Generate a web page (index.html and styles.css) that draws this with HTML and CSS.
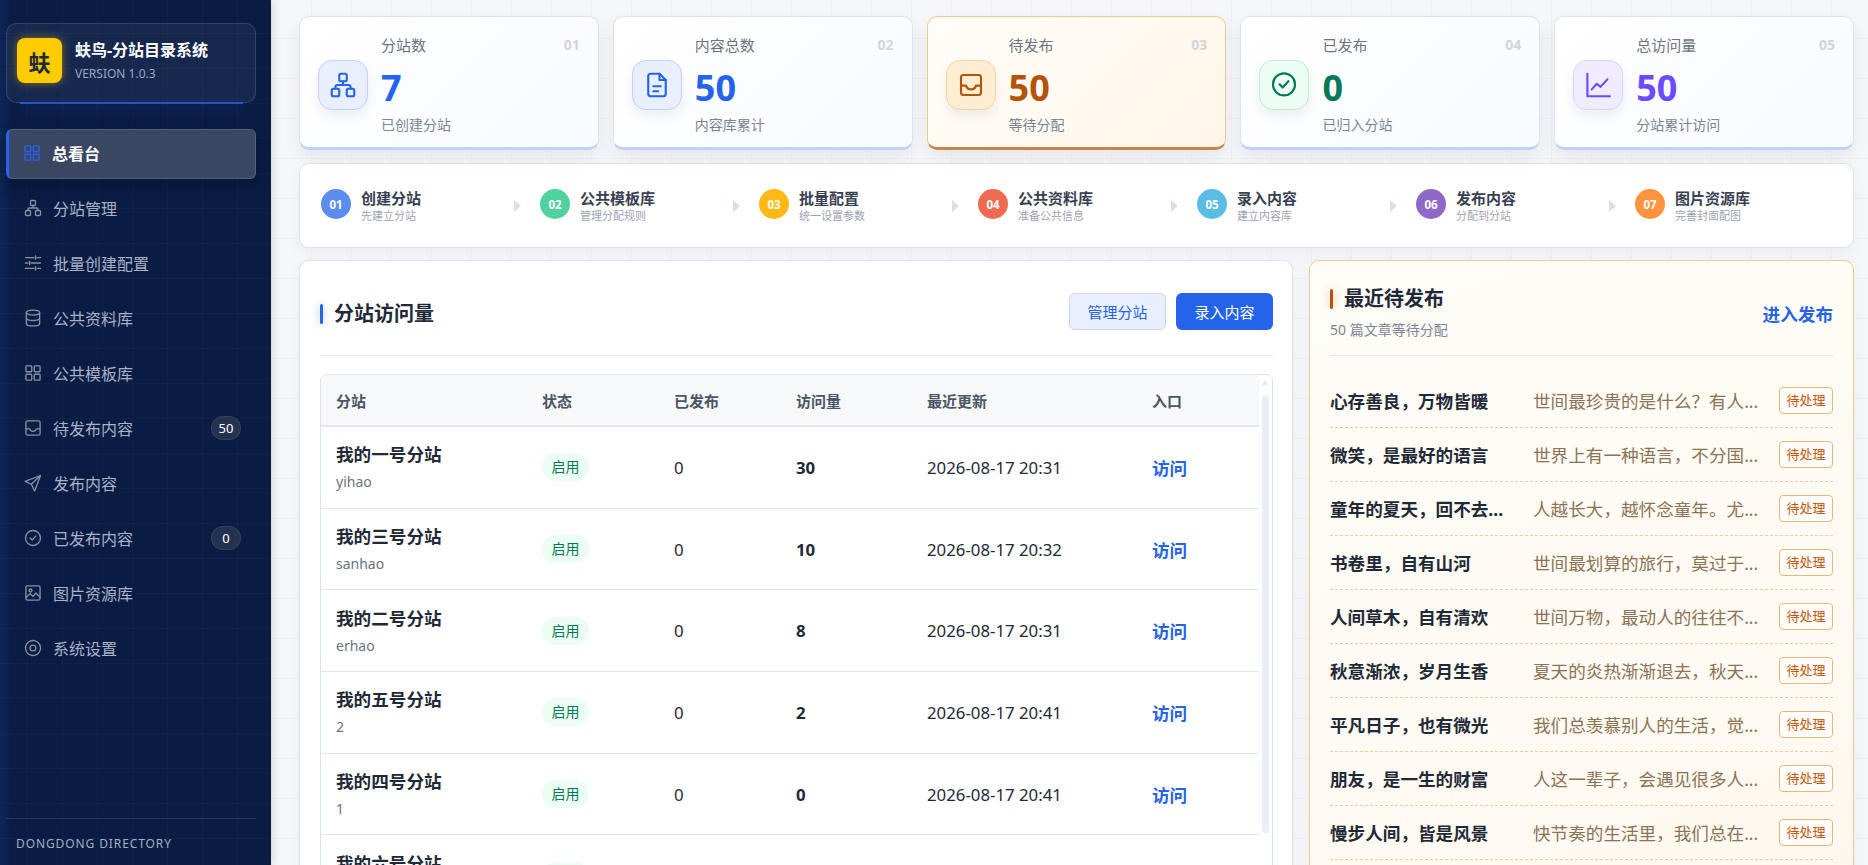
FILE: index.html
```html
<!DOCTYPE html>
<html lang="zh-CN">

<head>
    <meta charset="UTF-8">
    <meta name="viewport" content="width=device-width, initial-scale=1.0">
    <title>蚨鸟-分站目录系统</title>
    <link rel="stylesheet" href="styles.css">
</head>

<body>
    <aside class="sidebar">
        <div class="brand">
            <div class="brand-logo">蚨</div>
            <div>
                <div class="brand-name">蚨鸟-分站目录系统</div>
                <div class="brand-version">VERSION 1.0.3</div>
            </div>
        </div>

        <nav class="nav">
            <a class="nav-item active">
                <svg class="icon" viewBox="0 0 24 24"><rect x="3.5" y="3.5" width="7" height="7" rx="1"/><rect x="13.5" y="3.5" width="7" height="7" rx="1"/><rect x="3.5" y="13.5" width="7" height="7" rx="1"/><rect x="13.5" y="13.5" width="7" height="7" rx="1"/></svg>
                总看台
            </a>
            <a class="nav-item">
                <svg class="icon" viewBox="0 0 24 24"><rect x="9" y="3" width="6" height="6" rx="1.2"/><rect x="3" y="15" width="6" height="6" rx="1.2"/><rect x="15" y="15" width="6" height="6" rx="1.2"/><path d="M6 15v-1.5a1.5 1.5 0 0 1 1.5-1.5h9a1.5 1.5 0 0 1 1.5 1.5V15M12 9v3"/></svg>
                分站管理
            </a>
            <a class="nav-item">
                <svg class="icon" viewBox="0 0 24 24"><path d="M3 5.5h10M17 5.5h4M15 3.5v4M3 12h3M10 12h11M8 10v4M3 18.5h10M17 18.5h4M15 16.5v4"/></svg>
                批量创建配置
            </a>
            <a class="nav-item">
                <svg class="icon" viewBox="0 0 24 24"><ellipse cx="12" cy="5.5" rx="8" ry="3"/><path d="M4 5.5v13c0 1.7 3.6 3 8 3s8-1.3 8-3v-13M4 12c0 1.7 3.6 3 8 3s8-1.3 8-3"/></svg>
                公共资料库
            </a>
            <a class="nav-item">
                <svg class="icon" viewBox="0 0 24 24"><rect x="3.5" y="3.5" width="7" height="7" rx="1"/><rect x="13.5" y="3.5" width="7" height="7" rx="1"/><rect x="3.5" y="13.5" width="7" height="7" rx="1"/><rect x="13.5" y="13.5" width="7" height="7" rx="1"/></svg>
                公共模板库
            </a>
            <a class="nav-item">
                <svg class="icon" viewBox="0 0 24 24"><rect x="3.5" y="3.5" width="17" height="17" rx="2"/><path d="M3.5 13H8c.6 2 2 3 4 3s3.400-1 4-3h4.500"/></svg>
                待发布内容
                <span class="nav-badge">50</span>
            </a>
            <a class="nav-item">
                <svg class="icon" viewBox="0 0 24 24"><path d="M21 3 2.500 10l7.500 3.500L14 21.500z"/><path d="M21 3 10 13.500"/></svg>
                发布内容
            </a>
            <a class="nav-item">
                <svg class="icon" viewBox="0 0 24 24"><circle cx="12" cy="12" r="9"/><path d="m8.500 12 2.500 2.500 4.500-5"/></svg>
                已发布内容
                <span class="nav-badge">0</span>
            </a>
            <a class="nav-item">
                <svg class="icon" viewBox="0 0 24 24"><rect x="3.500" y="3.500" width="17" height="17" rx="2"/><circle cx="9" cy="9" r="1.800"/><path d="m3.500 17.500 5-4.500 3.500 3 3.500-4 5 5"/></svg>
                图片资源库
            </a>
            <a class="nav-item">
                <svg class="icon" viewBox="0 0 24 24"><circle cx="12" cy="12" r="3.500"/><circle cx="12" cy="12" r="9" stroke-dasharray="5 0.600"/></svg>
                系统设置
            </a>
        </nav>

        <div class="sidebar-foot">DONGDONG DIRECTORY</div>
    </aside>

    <main class="main">
        <section class="stats">
            <div class="stat">
                <div class="stat-icon"><svg class="icon" viewBox="0 0 24 24"><rect x="9" y="3" width="6" height="6" rx="1.200"/><rect x="3" y="15" width="6" height="6" rx="1.200"/><rect x="15" y="15" width="6" height="6" rx="1.200"/><path d="M6 15v-1.500a1.500 1.500 0 0 1 1.500-1.500h9a1.500 1.500 0 0 1 1.500 1.500V15M12 9v3"/></svg></div>
                <div>
                    <div class="stat-label">分站数</div>
                    <div class="stat-value">7</div>
                    <div class="stat-sub">已创建分站</div>
                </div>
                <span class="stat-no">01</span>
            </div>
            <div class="stat">
                <div class="stat-icon"><svg class="icon" viewBox="0 0 24 24"><path d="M14 3H7a2 2 0 0 0-2 2v14a2 2 0 0 0 2 2h10a2 2 0 0 0 2-2V8z"/><path d="M14 3v5h5M9 13h6M9 17h4"/></svg></div>
                <div>
                    <div class="stat-label">内容总数</div>
                    <div class="stat-value">50</div>
                    <div class="stat-sub">内容库累计</div>
                </div>
                <span class="stat-no">02</span>
            </div>
            <div class="stat warn">
                <div class="stat-icon"><svg class="icon" viewBox="0 0 24 24"><rect x="4" y="4" width="16" height="16" rx="2"/><path d="M4 12.500h4c.6 2 2 3 4 3s3.400-1 4-3h4"/></svg></div>
                <div>
                    <div class="stat-label">待发布</div>
                    <div class="stat-value">50</div>
                    <div class="stat-sub">等待分配</div>
                </div>
                <span class="stat-no">03</span>
            </div>
            <div class="stat ok">
                <div class="stat-icon"><svg class="icon" viewBox="0 0 24 24"><circle cx="12" cy="11.500" r="8.800"/><path d="m8.500 11.500 2.500 2.500 4.500-5"/></svg></div>
                <div>
                    <div class="stat-label">已发布</div>
                    <div class="stat-value">0</div>
                    <div class="stat-sub">已归入分站</div>
                </div>
                <span class="stat-no">04</span>
            </div>
            <div class="stat violet">
                <div class="stat-icon"><svg class="icon" viewBox="0 0 24 24"><path d="M3.500 3v18h18M7 15.500l4-4.500 3 2.500 5.500-6"/></svg></div>
                <div>
                    <div class="stat-label">总访问量</div>
                    <div class="stat-value">50</div>
                    <div class="stat-sub">分站累计访问</div>
                </div>
                <span class="stat-no">05</span>
            </div>
        </section>

        <section class="steps">
            <div class="step"><span class="step-no c1">01</span><div><div class="step-title">创建分站</div><div class="step-sub">先建立分站</div></div></div>
            <div class="step"><span class="step-no c2">02</span><div><div class="step-title">公共模板库</div><div class="step-sub">管理分配规则</div></div></div>
            <div class="step"><span class="step-no c3">03</span><div><div class="step-title">批量配置</div><div class="step-sub">统一设置参数</div></div></div>
            <div class="step"><span class="step-no c4">04</span><div><div class="step-title">公共资料库</div><div class="step-sub">准备公共信息</div></div></div>
            <div class="step"><span class="step-no c5">05</span><div><div class="step-title">录入内容</div><div class="step-sub">建立内容库</div></div></div>
            <div class="step"><span class="step-no c6">06</span><div><div class="step-title">发布内容</div><div class="step-sub">分配到分站</div></div></div>
            <div class="step"><span class="step-no c7">07</span><div><div class="step-title">图片资源库</div><div class="step-sub">完善封面配图</div></div></div>
        </section>

        <section class="panels">
            <div class="panel panel-sites">
                <div class="panel-head">
                    <h2 class="panel-title">分站访问量</h2>
                    <div class="panel-actions">
                        <button class="btn btn-soft">管理分站</button>
                        <button class="btn btn-primary">录入内容</button>
                    </div>
                </div>

                <div class="table-wrap">
                    <table class="site-table">
                        <colgroup>
                            <col class="col-name">
                            <col class="col-status">
                            <col class="col-pub">
                            <col class="col-visits">
                            <col class="col-date">
                            <col class="col-link">
                        </colgroup>
                        <thead>
                            <tr><th>分站</th><th>状态</th><th>已发布</th><th>访问量</th><th>最近更新</th><th>入口</th></tr>
                        </thead>
                        <tbody>
                            <tr>
                                <td><div class="site-name">我的一号分站</div><div class="site-slug">yihao</div></td>
                                <td><span class="pill">启用</span></td>
                                <td>0</td><td class="strong">30</td><td>2026-08-17 20:31</td><td><a class="visit">访问</a></td>
                            </tr>
                            <tr>
                                <td><div class="site-name">我的三号分站</div><div class="site-slug">sanhao</div></td>
                                <td><span class="pill">启用</span></td>
                                <td>0</td><td class="strong">10</td><td>2026-08-17 20:32</td><td><a class="visit">访问</a></td>
                            </tr>
                            <tr>
                                <td><div class="site-name">我的二号分站</div><div class="site-slug">erhao</div></td>
                                <td><span class="pill">启用</span></td>
                                <td>0</td><td class="strong">8</td><td>2026-08-17 20:31</td><td><a class="visit">访问</a></td>
                            </tr>
                            <tr>
                                <td><div class="site-name">我的五号分站</div><div class="site-slug">2</div></td>
                                <td><span class="pill">启用</span></td>
                                <td>0</td><td class="strong">2</td><td>2026-08-17 20:41</td><td><a class="visit">访问</a></td>
                            </tr>
                            <tr>
                                <td><div class="site-name">我的四号分站</div><div class="site-slug">1</div></td>
                                <td><span class="pill">启用</span></td>
                                <td>0</td><td class="strong">0</td><td>2026-08-17 20:41</td><td><a class="visit">访问</a></td>
                            </tr>
                            <tr>
                                <td><div class="site-name">我的六号分站</div><div class="site-slug">&nbsp;</div></td>
                                <td><span class="pill">启用</span></td>
                                <td></td><td></td><td></td><td></td>
                            </tr>
                        </tbody>
                    </table>
                    <div class="scrollbar">
                        <div class="scroll-up"></div>
                        <div class="scroll-thumb"></div>
                    </div>
                </div>
            </div>

            <div class="panel panel-warm">
                <div class="panel-head">
                    <div>
                        <h2 class="panel-title">最近待发布</h2>
                        <p class="panel-sub">50 篇文章等待分配</p>
                    </div>
                    <a class="panel-link">进入发布</a>
                </div>

                <ul class="queue">
                    <li><span class="queue-title">心存善良，万物皆暖</span><span class="queue-text">世间最珍贵的是什么？有人...</span><span class="tag">待处理</span></li>
                    <li><span class="queue-title">微笑，是最好的语言</span><span class="queue-text">世界上有一种语言，不分国...</span><span class="tag">待处理</span></li>
                    <li><span class="queue-title">童年的夏天，回不去...</span><span class="queue-text">人越长大，越怀念童年。尤...</span><span class="tag">待处理</span></li>
                    <li><span class="queue-title">书卷里，自有山河</span><span class="queue-text">世间最划算的旅行，莫过于...</span><span class="tag">待处理</span></li>
                    <li><span class="queue-title">人间草木，自有清欢</span><span class="queue-text">世间万物，最动人的往往不...</span><span class="tag">待处理</span></li>
                    <li><span class="queue-title">秋意渐浓，岁月生香</span><span class="queue-text">夏天的炎热渐渐退去，秋天...</span><span class="tag">待处理</span></li>
                    <li><span class="queue-title">平凡日子，也有微光</span><span class="queue-text">我们总羡慕别人的生活，觉...</span><span class="tag">待处理</span></li>
                    <li><span class="queue-title">朋友，是一生的财富</span><span class="queue-text">人这一辈子，会遇见很多人...</span><span class="tag">待处理</span></li>
                    <li><span class="queue-title">慢步人间，皆是风景</span><span class="queue-text">快节奏的生活里，我们总在...</span><span class="tag">待处理</span></li>
                </ul>
            </div>
        </section>
    </main>
</body>

</html>
```

FILE: styles.css
```css
* {
    box-sizing: border-box;
    padding: 0;
    margin: 0;
}

html,
body {
    height: 100%;
    overflow: hidden;
}

body {
    display: flex;
    font-family: "Noto Sans", "Noto Sans CJK SC", sans-serif;
    font-size: 16px;
    color: #1f2937;
    background-color: #f4f6f9;
}

.icon {
    display: block;
    width: 20px;
    height: 20px;
    fill: none;
    stroke: currentColor;
    stroke-width: 1.6;
    stroke-linecap: round;
    stroke-linejoin: round;
    flex-shrink: 0;
}

/* sidebar */
.sidebar {
    display: flex;
    flex-direction: column;
    flex-shrink: 0;
    width: 271px;
    height: 100vh;
    padding: 23px 15px 0 6px;
    background-color: #0a1c44;
    background-image:
        linear-gradient(90deg, rgba(28, 84, 170, 0.2), rgba(28, 84, 170, 0) 12px),
        linear-gradient(rgba(255, 255, 255, 0.025) 1px, transparent 1px),
        linear-gradient(90deg, rgba(255, 255, 255, 0.025) 1px, transparent 1px);
    background-size: 100% 100%, 35px 35px, 35px 35px;
    background-position: 0 0, 0 33px, 27px 0;
    box-shadow: 2px 0 8px rgba(15, 23, 42, 0.12);
}

.brand {
    position: relative;
    display: flex;
    align-items: center;
    gap: 13px;
    height: 80px;
    padding: 0 0 5px 10px;
    border: 1px solid rgba(255, 255, 255, 0.12);
    border-radius: 10px;
    background-color: rgba(255, 255, 255, 0.055);
}

.brand::after {
    content: "";
    position: absolute;
    left: 13px;
    right: 12px;
    bottom: -2px;
    height: 2px;
    background-color: #2158c9;
    box-shadow: 0 4px 12px rgba(37, 99, 235, 0.45);
}

.brand-logo {
    display: flex;
    align-items: center;
    justify-content: center;
    width: 45px;
    height: 45px;
    border-radius: 8px;
    background-color: #ffcc00;
    box-shadow: 0 0 10px rgba(255, 204, 0, 0.45);
    color: #1f2937;
    font-size: 22px;
    font-weight: 700;
}

.brand-name {
    color: #fff;
    font-size: 16px;
    font-weight: 700;
    line-height: 24px;
}

.brand-version {
    margin-top: 3px;
    color: #9aa7bf;
    font-size: 12px;
    line-height: 18px;
}

.nav {
    display: flex;
    flex-direction: column;
    gap: 5px;
    margin-top: 26px;
}

.nav-item {
    display: flex;
    align-items: center;
    gap: 10px;
    height: 50px;
    padding: 0 14px 2px 16px;
    border: 1px solid transparent;
    border-radius: 6px;
    color: #a8b2c6;
    font-size: 16px;
}

.nav-item .icon {
    color: #868fa3;
}

.nav-item.active {
    padding-left: 13px;
    border-color: rgba(255, 255, 255, 0.14);
    border-left: 3px solid #2563eb;
    background-color: #3a4763;
    color: #fff;
    font-weight: 700;
    box-shadow: 0 6px 16px rgba(0, 0, 0, 0.2);
}

.nav-item.active .icon {
    color: #2563eb;
}

.nav-badge {
    margin-left: auto;
    width: 30px;
    height: 24px;
    border: 1px solid rgba(255, 255, 255, 0.08);
    border-radius: 12px;
    background-color: #24324f;
    color: #fff;
    font-size: 13px;
    line-height: 22px;
    text-align: center;
}

.sidebar-foot {
    margin-top: auto;
    height: 47px;
    padding: 16px 0 0 10px;
    border-top: 1px solid rgba(255, 255, 255, 0.12);
    color: #a3aec2;
    font-size: 12px;
    line-height: 18px;
    letter-spacing: 0.9px;
}

/* main */
.main {
    flex: 1;
    min-width: 0;
    height: 100vh;
    padding: 16px 14px 0 28px;
    overflow: hidden;
    background-image:
        linear-gradient(rgba(15, 23, 42, 0.025) 1px, transparent 1px),
        linear-gradient(90deg, rgba(15, 23, 42, 0.025) 1px, transparent 1px);
    background-size: 40px 40px;
    background-position: 0 -2px, 0 0;
}

.stats {
    display: grid;
    grid-template-columns: repeat(5, minmax(0, 1fr));
    gap: 14px;
    margin-bottom: 13px;
}

.stat {
    position: relative;
    display: flex;
    align-items: center;
    gap: 13px;
    height: 134px;
    padding: 5px 18px 0;
    border: 1px solid #dbe3f0;
    border-bottom: 3px solid #bfd1f6;
    border-radius: 10px;
    background: linear-gradient(135deg, #fff, #f8faff);
    box-shadow: 0 8px 18px rgba(15, 23, 42, 0.06);
    --tone: #2563eb;
    --tone-bg: #e9effd;
    --tone-line: #c2d2f8;
}

.stat.warn {
    border-color: #f0c98e;
    border-bottom-color: #c8854a;
    background: linear-gradient(135deg, #fffdf9, #fff6e9);
    --tone: #b45309;
    --tone-bg: #fdeed3;
    --tone-line: #f3d5a4;
}

.stat.ok {
    --tone: #047857;
    --tone-bg: #ecfdf3;
    --tone-line: #c3ebd5;
}

.stat.violet {
    --tone: #6d4aff;
    --tone-bg: #f0ebff;
    --tone-line: #ddd4fd;
}

.stat-icon {
    display: flex;
    align-items: center;
    justify-content: center;
    flex-shrink: 0;
    width: 50px;
    height: 50px;
    border: 1px solid var(--tone-line);
    border-radius: 14px;
    background-color: var(--tone-bg);
    color: var(--tone);
    box-shadow: 0 6px 12px rgba(15, 23, 42, 0.07);
}

.stat-icon .icon {
    width: 30px;
    height: 30px;
    stroke-width: 1.7;
}

.stat-label {
    color: #6b7280;
    font-size: 15px;
    line-height: 22px;
}

.stat-value {
    margin-top: 10px;
    color: var(--tone);
    font-size: 36px;
    font-weight: 700;
    line-height: 44px;
}

.stat-sub {
    margin-top: 5px;
    color: #7b8494;
    font-size: 14px;
    line-height: 20px;
}

.stat-no {
    position: absolute;
    top: 18px;
    right: 18px;
    color: #d1d5db;
    font-size: 14px;
    font-weight: 700;
    line-height: 20px;
}

.steps {
    display: grid;
    grid-template-columns: repeat(7, minmax(0, 1fr));
    gap: 22px;
    height: 85px;
    margin-bottom: 12px;
    padding: 25px 21px 0;
    border: 1px solid #dde3ec;
    border-radius: 10px;
    background-color: #fff;
    box-shadow: 0 6px 16px rgba(15, 23, 42, 0.04);
}

.step {
    position: relative;
    display: flex;
    align-items: flex-start;
    gap: 10px;
}

.step:not(:last-child)::after {
    content: "";
    position: absolute;
    top: 11px;
    right: -3px;
    border-top: 6.5px solid transparent;
    border-bottom: 6.5px solid transparent;
    border-left: 7px solid #d9dfea;
}

.step-no {
    display: flex;
    align-items: center;
    justify-content: center;
    flex-shrink: 0;
    width: 30px;
    height: 30px;
    border-radius: 50%;
    color: #fff;
    font-size: 11.5px;
    font-weight: 700;
}

.c1 { background-color: #5b8dee; }
.c2 { background-color: #50d2a0; }
.c3 { background-color: #ffb914; }
.c4 { background-color: #ee6a50; }
.c5 { background-color: #5bbde4; }
.c6 { background-color: #8f68c8; }
.c7 { background-color: #ff9340; }

.step-title {
    color: #374151;
    font-size: 15px;
    font-weight: 700;
    line-height: 19px;
}

.step-sub {
    color: #9ca3af;
    font-size: 11px;
    line-height: 15px;
}

/* panels */
.panels {
    display: grid;
    grid-template-columns: minmax(0, 1fr) 545px;
    gap: 16px;
}

.panel {
    padding: 27px 20px 20px;
    border: 1px solid #dde3ec;
    border-radius: 10px;
    background-color: #fff;
    box-shadow: 0 6px 16px rgba(15, 23, 42, 0.04);
}

.panel-sites {
    padding-right: 19px;
}

.panel-warm {
    border-color: #efcb92;
    background: linear-gradient(160deg, #fffdf8, #fff8ef);
}

.panel-head {
    display: flex;
    align-items: center;
    justify-content: space-between;
    height: 68px;
    padding-bottom: 16px;
    border-bottom: 1px solid #e5e7eb;
}

.panel-title {
    display: flex;
    align-items: center;
    gap: 11px;
    color: #1f2937;
    font-size: 20px;
    font-weight: 700;
    line-height: 22px;
}

.panel-title::before {
    content: "";
    width: 3px;
    height: 20px;
    border-radius: 2px;
    background-color: #2563eb;
    box-shadow: 0 0 8px rgba(37, 99, 235, 0.45);
}

.panel-warm .panel-title::before {
    background-color: #b45309;
    box-shadow: 0 0 8px rgba(180, 83, 9, 0.4);
}

.panel-sub {
    margin-top: 10px;
    color: #7b8494;
    font-size: 14px;
    line-height: 20px;
}

.panel-link {
    color: #2563eb;
    font-size: 17.6px;
    font-weight: 700;
}

.panel-actions {
    display: flex;
    align-self: flex-start;
    gap: 10px;
    margin-top: 5px;
}

.btn {
    width: 97px;
    height: 37px;
    border-radius: 6px;
    font-family: inherit;
    font-size: 15px;
}

.btn-soft {
    border: 1px solid #c6d5f8;
    background-color: #e9effd;
    color: #2563eb;
}

.btn-primary {
    border: none;
    background-color: #2563eb;
    color: #fff;
}

.table-wrap {
    display: flex;
    align-items: flex-start;
    height: 540px;
    margin-top: 18px;
    overflow: hidden;
    border: 1px solid #dbe3ee;
    border-radius: 7px;
}

.scrollbar {
    flex-shrink: 0;
    width: 13px;
    padding: 0 3px;
}

.scroll-up {
    width: 0;
    height: 0;
    margin: 5px 0 10px;
    border-left: 3.5px solid transparent;
    border-right: 3.5px solid transparent;
    border-bottom: 5px solid #dfe7fa;
}

.scroll-thumb {
    width: 7px;
    height: 438px;
    border-radius: 4px;
    background-color: #e8eefb;
}

.site-table {
    flex: 1;
    min-width: 0;
    table-layout: fixed;
    border-collapse: separate;
    border-spacing: 0;
    color: #1f2937;
    font-size: 16.8px;
}

.col-name { width: 206px; }
.col-status { width: 132px; }
.col-pub { width: 122px; }
.col-visits { width: 131px; }
.col-date { width: 225px; }

.site-table th {
    height: 52px;
    padding: 0 15px;
    border-bottom: 2px solid #e5e7eb;
    background-color: #f7f8fa;
    color: #4b5563;
    font-size: 15px;
    font-weight: 700;
    text-align: left;
}

.site-table td {
    height: 81.7px;
    padding: 0 15px;
    border-bottom: 1px solid #e2e8f0;
}

.site-table .strong {
    font-weight: 700;
}

.site-name {
    color: #1f2937;
    font-size: 17.6px;
    font-weight: 700;
    line-height: 24px;
}

.site-slug {
    margin-top: 6px;
    color: #6b7280;
    font-size: 14px;
    line-height: 20px;
}

.pill {
    display: inline-block;
    width: 47px;
    height: 28px;
    border-radius: 14px;
    background-color: #ecfdf3;
    color: #047857;
    font-size: 14px;
    line-height: 28px;
    text-align: center;
}

.visit {
    color: #2563eb;
    font-size: 17.6px;
    font-weight: 700;
}

.queue {
    margin-top: 18px;
    list-style: none;
}

.queue li {
    display: grid;
    grid-template-columns: 180px minmax(0, 1fr) 54px;
    align-items: center;
    column-gap: 23px;
    height: 54px;
    border-bottom: 1px dashed #e8cfa3;
}

.queue-title,
.queue-text {
    white-space: nowrap;
    font-size: 17.6px;
}

.queue-title {
    color: #1f2937;
    font-weight: 700;
}

.queue-text {
    color: #8b7355;
}

.tag {
    height: 27px;
    border: 1px solid #e8b878;
    border-radius: 4px;
    background-color: #fffdf9;
    color: #c2570c;
    font-size: 13px;
    line-height: 25px;
    text-align: center;
}
```
